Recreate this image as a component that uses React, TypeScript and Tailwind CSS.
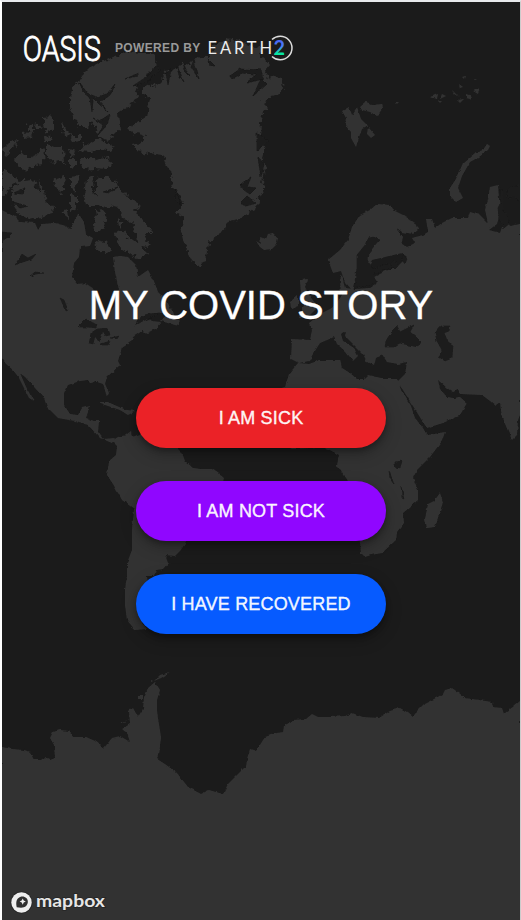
const seaColor = '#1b1b1b';
const landColor = '#333333';

const arcticLand = [
  // Greenland
  'M150 98 147 117 138 122 128 128 133 133 146 136 144 141 133 144 137 151 143 152 163 155 165 162 170 170 173 187 177 190 183 203 176 213 184 217 181 230 184 243 187 250 192 260 200 267 207 257 209 243 213 238 222 232 230 221 238 219 248 213 257 207 258 200 264 190 262 180 267 168 262 158 266 145 260 135 262 113 268 108 262 102 270 96 278 95 284 88 282 79 274 75 268 79 265 70 270 64 262 57 259 48 250 45 240 42 225 40 214 46 210 57 200 57 190 64 183 63 176 70 165 72 162 80 156 86 150 84 143 88 143 94Z',
  // Ellesmere and Axel Heiberg
  'M80 83 83 74 90 67 103 62 113 57 127 52 140 53 153 53 157 65 149 71 143 80 136 87 138 95 133 103 124 109 118 113 120 130 113 135 108 140 98 137 96 128 92 122 88 127 80 127 74 118 70 107 70 97 73 87Z',
  // Devon and Somerset
  'M78 151 84 147 82 142 90 144 98 139 108 143 114 146 110 151 98 150 90 152Z M80 158 90 158 97 160 108 157 111 163 107 169 94 168 82 169Z',
  // western islands
  'M54 122 54 129 46 134 44 126 44 117 50 116Z M61 123 67 129 70 136 64 134Z M36 122 43 130 34 130Z M27 125 33 123 33 130 27 130Z M22 133 33 132 31 138 24 139Z M43 136 52 137 54 141 44 141Z M69 136 80 136 80 141 72 142Z M2 150 10 142 17 140 14 148 6 155Z M15 160 22 151 29 158 37 155 44 147 43 164 34 165 28 170 18 166Z M46 143 56 148 63 148 64 164 57 159 54 164 46 155Z M70 148 76 150 75 155 69 156Z M70 159 75 159 75 167 70 168Z',
  // Banks and Victoria
  'M2 170 9 173 19 181 12 184 6 194 2 197Z M12 190 19 181 31 179 38 182 44 190 47 202 54 208 51 213 40 217 27 219 19 214 12 203Z M54 180 65 176 64 188 61 195 55 185Z M70 177 80 176 75 189 70 190Z M70 195 77 196 77 208 70 211Z M61 212 68 210 69 218Z',
  // Baffin
  'M86 179 94 176 93 188 96 198 96 183 99 177 107 177 116 182 120 191 125 192 130 200 138 203 140 208 134 210 141 219 153 232 144 232 148 247 137 245 139 237 132 229 134 223 124 219 118 208 108 206 103 208 98 206 86 206 84 194Z',
  'M96 210 104 212 107 220 101 231 94 231 93 224 97 217Z M117 220 123 222 119 228Z M97 240 105 242 112 251 103 252 95 249Z M113 233 124 230 130 240 140 244 147 255 138 259 129 253 119 247 118 239Z',
];

const arcticWater = [
  'M80 83 87 93 96 97 107 94 115 84 110 95 100 102 108 112 99 104 93 98 92 112 90 98 83 92Z',
  'M125 79 139 73 137 76Z M133 86 148 76 157 66 160 70 147 82Z M110 114 100 121 93 118 103 125 98 135 107 125Z',
  'M177 66 184 82 179 75Z M171 69 168 85 166 72Z M194 60 199 79 191 67Z M183 63 189 76 186 73Z',
  'M230 76 240 69 261 70 263 79 246 83 257 74 242 73 232 79Z M253 96 261 79 266 84Z M208 59 215 66 210 65Z',
  'M241 184 251 177 247 187 256 188 250 194 241 188Z M240 203 247 196 256 203 246 206Z M258 157 264 164 261 177Z M257 133 268 141 257 151Z M176 190 181 205 175 200Z',
  'M13 202 28 206 20 208Z M38 180 40 192 35 188Z M14 193 25 188 23 194Z M103 192 118 187 109 193Z',
];

const continents = [
  // North America
  'M2 210 15 217 20 222 35 223 38 230 42 224 55 223 66 226 70 230 78 213 84 222 86 234 93 238 90 246 80 247 79 257 74 263 72 277 78 284 85 283 97 291 101 306 107 312 115 307 119 290 115 272 113 257 120 256 128 257 136 265 138 277 148 270 154 281 158 292 167 301 171 310 168 313 156 313 144 315 134 326 146 317 151 321 162 322 157 328 147 333 142 331 133 337 132 341 122 348 118 361 120 365 107 377 105 384 109 393 107 397 103 384 97 382 90 383 88 380 80 381 68 385 64 393 64 405 70 414 78 415 82 408 90 406 86 418 94 421 99 421 98 432 103 439 115 438 112 443 100 438 88 425 75 421 58 418 47 407 44 398 35 388 25 377 20 373 27 389 34 401 29 398 19 378 13 370 6 364 2 358Z',
  'M168 313 172 308 175 318 179 322 179 326 171 324 161 321Z M97 402 108 402 119 407 127 410 136 411 128 415 120 410 108 406Z',
  // South America
  'M112 441 118 437 126 435 131 431 132 437 140 434 165 438 178 449 182 453 185 461 193 468 201 469 212 469 219 474 224 478 222 486 208 500 200 530 187 541 180 551 175 556 165 555 168 563 163 569 156 570 154 576 147 576 149 596 140 610 141 622 147 629 135 630 127 620 125 605 125 590 127 576 127 563 132 550 132 530 134 509 122 500 113 484 107 475 109 461 116 455 117 446Z',
  // Africa
  'M285 387 289 374 298 363 309 364 320 360 340 360 342 368 350 373 357 379 364 379 368 375 380 378 397 378 401 390 411 406 415 418 423 428 427 435 445 432 442 441 430 457 417 470 413 478 418 490 418 500 410 507 403 513 404 523 397 532 396 540 382 553 371 555 365 557 361 553 360 542 353 520 350 505 347 481 337 465 339 455 328 449 320 446 310 448 292 449 278 440 267 425 267 405 275 390Z',
  'M440 493 443 502 435 527 427 528 425 519 428 504 434 501Z',
  // Eurasia
  'M292 339 310 340 312 330 309 323 322 313 334 307 341 296 340 280 342 275 345 288 354 289 370 288 378 283 374 277 388 270 398 266 407 257 402 253 385 257 372 260 366 273 356 280 353 291 345 282 341 271 333 273 328 260 340 250 348 240 352 227 360 215 370 210 377 204 390 205 393 210 403 215 415 223 418 230 413 234 402 232 397 228 403 237 402 243 407 247 415 243 412 238 423 235 428 232 426 219 432 219 435 228 442 223 452 218 468 218 470 212 480 215 488 223 485 210 488 199 490 187 498 185 500 213 497 224 489 230 500 233 505 218 510 226 520 224 520 415 518 420 517 435 512 440 502 417 500 403 496 406 490 401 482 395 460 394 458 390 453 392 447 388 438 380 440 389 447 397 455 398 460 397 467 403 460 415 443 423 427 428 423 422 403 390 397 382 405 374 407 362 398 364 387 362 382 354 376 358 374 366 367 362 363 354 357 348 345 336 346 330 341 334 343 341 354 348 358 356 353 361 346 352 337 344 334 337 327 340 320 343 313 354 309 361 299 363 291 359Z',
  // British Isles
  'M300 280 308 279 305 287 309 295 318 307 309 316 299 318 304 306 301 296Z M290 302 298 295 298 306 291 309Z',
  // Iceland
  'M256 241 261 244 260 237 266 239 268 234 273 233 278 239 277 243 271 249 264 250 260 247Z',
  // Novaya Zemlya
  'M456 202 450 196 450 188 456 179 463 163 475 153 483 150 487 144 490 146 488 150 479 157 470 162 462 176 458 188 463 198Z',
  // Svalbard
  'M342 111 349 107 352 115 357 107 361 119 368 126 362 129 359 137 356 147 351 138 351 132 345 125 346 118Z M360 107 366 102 374 105 382 104 383 108 377 116 370 112 362 110Z M368 127 375 135 371 138 367 134Z',
  // Franz Josef Land
  'M430 97 438 94 437 99 432 98Z M442 94 446 96 440 99Z M452 90 459 97 454 94Z M466 94 472 96 470 99 466 98Z M457 100 464 99 460 103Z M473 91 480 88 478 94Z M459 84 463 87 460 88Z M474 78 477 79 475 80Z M395 102 399 102 397 104Z M438 101 442 102 440 104Z M462 77 465 76 464 79Z',
  // Antarctica
  'M2 747 12 749 24 750 31 752 35 760 40 760 44 757 50 760 55 758 54 745 50 738 53 732 60 730 69 731 73 737 86 737 95 741 104 748 112 738 120 736 130 742 127 733 122 729 130 724 129 711 133 708 138 717 143 709 144 697 148 688 155 682 160 690 157 700 157 712 161 737 159 755 157 759 165 764 177 773 188 787 201 794 209 790 223 794 228 784 239 773 246 766 247 759 250 749 256 751 260 745 265 737 277 733 283 732 284 726 293 720 306 719 312 714 318 717 331 717 345 716 352 713 363 717 379 718 390 711 400 708 407 712 413 717 417 711 424 704 434 699 443 694 445 690 452 688 459 693 465 698 479 700 492 702 493 707 502 708 504 714 514 706 520 701 520 920 2 920Z',
  'M154 681 160 675 170 672 161 678Z M151 680 153 681 151 682Z M120 723 128 720 123 723Z M138 695 143 695 143 699 138 699Z',
];

const inlandWater = [
  // Canadian lakes
  'M15 265 22 254 28 258 36 254 32 259 23 262Z M30 276 35 272 44 273 36 274Z M60 298 64 300 68 310 66 311Z M2 232 12 233 8 237 2 241Z',
  // Great Lakes
  'M78 327 86 319 97 325 96 328 88 327Z M89 343 91 333 97 329 108 328 110 335 106 336 103 331 99 342 95 336 93 344Z M101 344 110 341 108 345 102 345Z M110 338 119 336 117 339Z M140 317 148 314 160 313 150 318 136 324Z',
  // Baltic
  'M357 268 357 255 365 245 368 238 374 237 379 240 374 246 369 253 368 263 373 269 387 264 394 267 385 270 374 274 374 283 366 286 358 288 355 280Z M390 264 394 260 398 266 395 269Z M403 255 407 259 405 264 402 260Z',
  // Black Sea and Caspian
  'M385 347 386 341 392 331 397 326 400 332 414 325 410 332 416 337 421 342 418 347 408 345 400 343 393 347Z M435 333 441 326 450 326 449 331 444 333 448 342 453 345 452 358 445 361 439 357 442 350 437 341Z',
  // lakes of Africa
  'M395 462 402 461 400 468 395 467Z M389 471 394 484 390 479Z M401 486 404 499 402 498Z',
  // Gulf of Ob
  'M500 187 502 190 502 210 508 215 509 224 504 228 499 219 498 208 501 202Z M507 191 511 187 519 186 519 201 513 196 509 199Z',
];

// Land that runs past the frame, so the rough coast filter leaves the edges clean
const edgeLand = 'M2 860H521V930H2Z M-4 255H8V350H-4Z M510 240H530V400H510Z M510 730H530V930H510Z M-4 765H8V930H-4Z';

function WorldMap() {
  return (
    <svg className="absolute inset-0 h-full w-full" viewBox="0 0 521 920" aria-hidden="true">
      <defs>
        <filter id="fjords" x="0" y="0" width="521" height="300" filterUnits="userSpaceOnUse">
          <feTurbulence type="fractalNoise" baseFrequency="0.19" numOctaves="3" seed="8" />
          <feDisplacementMap in="SourceGraphic" scale="8" xChannelSelector="R" yChannelSelector="G" />
          <feGaussianBlur stdDeviation="0.35" />
        </filter>
        <filter id="coast" x="-10" y="0" width="541" height="940" filterUnits="userSpaceOnUse">
          <feTurbulence type="fractalNoise" baseFrequency="0.16" numOctaves="3" seed="4" />
          <feDisplacementMap in="SourceGraphic" scale="3" xChannelSelector="R" yChannelSelector="G" />
          <feGaussianBlur stdDeviation="0.35" />
        </filter>
      </defs>
      <rect width="521" height="920" fill={seaColor} />
      <path d={arcticLand.join(' ')} fill={landColor} filter="url(#fjords)" />
      <g filter="url(#coast)">
        <path d={continents.join(' ')} fill={landColor} />
        <path d={arcticWater.join(' ')} fill={seaColor} stroke={seaColor} strokeWidth="0.8" />
        <path d={inlandWater.join(' ')} fill={seaColor} stroke={seaColor} strokeWidth="0.6" />
        <path d={edgeLand} fill={landColor} />
      </g>
    </svg>
  );
}

function Header() {
  return (
    <header className="relative flex h-[92px] items-center pl-[20px]">
      <svg width="82" height="48" viewBox="0 0 82 48" className="shrink-0 overflow-visible">
        <text x="1" y="37.2" transform="scale(0.8 1)" fill="#fff" fontFamily="Roboto, sans-serif" fontSize="35.5" fontWeight="300" stroke="#fff" strokeWidth="0.9" textLength="97.5" lengthAdjust="spacing">OASIS</text>
      </svg>
      <span className="ml-[11px] w-[88px] whitespace-nowrap font-['Liberation_Sans',Arial,sans-serif] text-[12px] font-bold leading-4 tracking-[0.35px] text-[#999]">POWERED BY</span>
      <svg width="90" height="32" viewBox="0 0 90 32" className="ml-[4px] shrink-0">
        <defs>
          <linearGradient id="two" x1="0" y1="0" x2="0" y2="1">
            <stop offset="0.25" stopColor="#4a68f5" />
            <stop offset="0.5" stopColor="#4b82f6" />
            <stop offset="0.75" stopColor="#08e6a0" />
          </linearGradient>
        </defs>
        <text x="0.5" y="22.3" fill="#eee" fontFamily="Lato, sans-serif" fontSize="16.5" textLength="64.5" lengthAdjust="spacing">EARTH</text>
        <path d="M65 7.5A11.8 11.8 0 1 1 65 24.5" fill="none" stroke="#ddd" strokeWidth="1.5" />
        <text x="66.5" y="23" fill="url(#two)" fontFamily="Lato, sans-serif" fontWeight="700" fontSize="20" textLength="11.5" lengthAdjust="spacingAndGlyphs">2</text>
      </svg>
    </header>
  );
}

const choices = [
  { label: 'I AM SICK', color: 'bg-[#eb2227]' },
  { label: 'I AM NOT SICK', color: 'bg-[#9006ff]' },
  { label: 'I HAVE RECOVERED', color: 'bg-[#065bff]' },
];

function MapboxLogo() {
  return (
    <svg width="100" height="26" viewBox="0 0 100 26" className="absolute bottom-[5px] left-[6px]">
      <circle cx="13.5" cy="13.5" r="11" fill="#222" opacity=".7" />
      <circle cx="13.5" cy="13.5" r="10.2" fill="#eee" />
      <path d="M8.7 18.3C7.7 12.8 8.7 10.8 10.2 9.3 12.5 7 16.2 7 18.3 9.1 20.4 11.2 20.4 14.8 18.1 17 16 19.1 12.7 18.9 8.7 18.3Z" fill="#303030" />
      <path d="m14.7 9.5 1 2.1 2.1 1-2.1 1-1 2.1-1-2.1-2.1-1 2.1-1z" fill="#eee" />
      <text x="28" y="18" fill="#e6e6e6" stroke="#252525" strokeWidth="1.5" paintOrder="stroke" fontFamily="Lato, sans-serif" fontSize="17" fontWeight="700" textLength="69" lengthAdjust="spacingAndGlyphs">mapbox</text>
    </svg>
  );
}

export default function App() {
  return (
    <div className="relative h-[920px] w-[521px] overflow-hidden bg-[#1b1b1b] font-['Liberation_Sans',Arial,sans-serif]">
      <WorldMap />
      <div className="relative flex h-full flex-col border-l-2 border-r border-t-2 border-l-white border-r-[#ccc] border-t-[#e8eaed]">
        <Header />
        <main className="flex flex-col items-center pt-[186px]">
          <h1 className="whitespace-nowrap text-[40px] leading-[50px] text-white [-webkit-text-stroke:0.3px_white]">MY COVID STORY</h1>
          <div className="mt-[58px] flex flex-col gap-[33px]">
            {choices.map(({ label, color }) => (
              <button key={label} className={`h-[60px] w-[250px] rounded-full text-[18px] tracking-[0.18px] text-white/95 [-webkit-text-stroke:0.35px_white] shadow-[0_3px_5px_rgba(0,0,0,0.25),0_6px_16px_rgba(0,0,0,0.25)] ${color}`}>
                {label}
              </button>
            ))}
          </div>
        </main>
        <MapboxLogo />
      </div>
    </div>
  );
}
